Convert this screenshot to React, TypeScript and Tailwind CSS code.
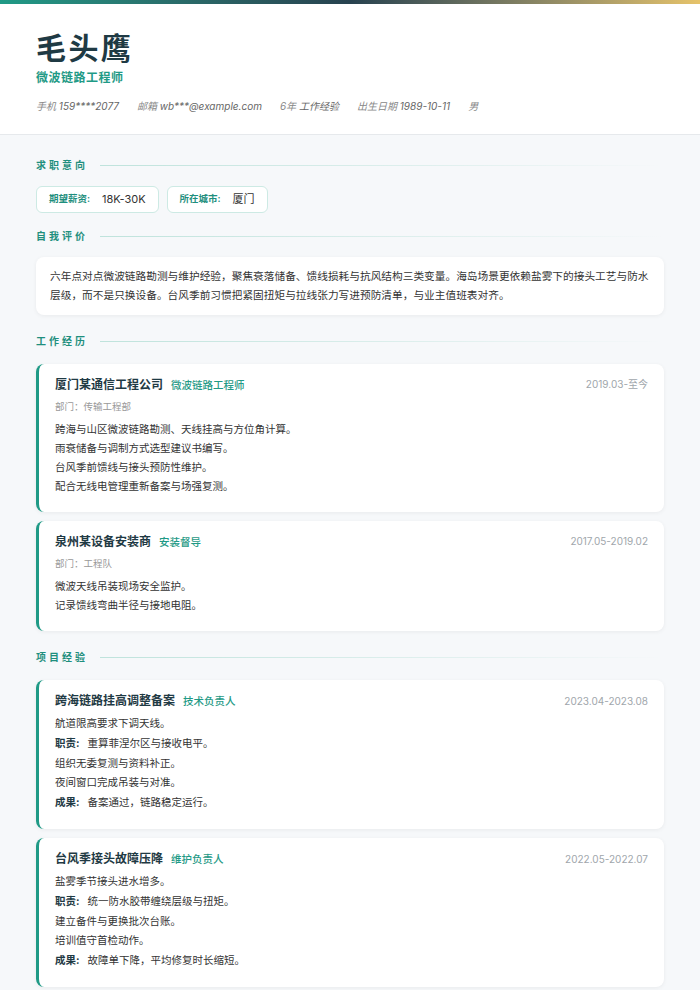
const FONT = { fontFamily: '"Inter", "Noto Sans CJK SC", sans-serif' };

function SectionTitle({ title }: { title: string }) {
  return (
    <div className="flex items-center gap-3">
      <span className="text-[10px] font-semibold tracking-[0.3em] text-[#1f8f7e]">{title}</span>
      <div className="h-px flex-1 bg-gradient-to-r from-[#bfe3dc] to-transparent" />
    </div>
  );
}

function Card({
  title,
  role,
  date,
  children,
}: {
  title: string;
  role: string;
  date: string;
  children: React.ReactNode;
}) {
  return (
    <div className="rounded-lg border-l-[3px] border-[#1f9a86] bg-white px-[16px] pb-[16px] pt-[12px] shadow-[0_1px_4px_rgba(0,0,0,0.06)]">
      <div className="flex items-center justify-between">
        <div className="flex items-baseline gap-2">
          <span className="text-[12px] font-bold text-[#1f3a44]">{title}</span>
          <span className="text-[10.5px] font-medium text-[#1f9a86]">{role}</span>
        </div>
        <span className="text-[10px] text-[#a0a6ab]">{date}</span>
      </div>
      {children}
    </div>
  );
}

function Line({ children }: { children: React.ReactNode }) {
  return <p className="text-[10.5px] leading-[19px] text-[#333]">{children}</p>;
}

function Label({ label, text }: { label: string; text: string }) {
  return (
    <p className="my-[1px] text-[10.5px] leading-[19px] text-[#333]">
      <span className="mr-2 font-bold text-[#1f3a44]">{label}</span>
      {text}
    </p>
  );
}

export default function App() {
  return (
    <div style={FONT} className="min-h-[990px] bg-[#f6f8fa]">
      <div className="h-1 bg-gradient-to-r from-[#1f9a86] via-[#27424f] to-[#e6c36a]" />
      <div className="border-b border-[#e6e9ec] bg-white px-[36px] pb-[20px] pt-[26px]">
        <h1 className="text-[30px] font-bold leading-[36px] tracking-[0.08em] text-[#1f3a44]">毛头鹰</h1>
        <p className="mt-[3px] text-[12px] font-semibold tracking-[0.04em] text-[#1f9a86]">微波链路工程师</p>
        <div className="mt-[12px] flex gap-[18px] text-[10px] italic text-[#888]">
          <span>手机 <span className="text-[#666]">159****2077</span></span>
          <span>邮箱 <span className="text-[#666]">wb***@example.com</span></span>
          <span>6年 <span className="text-[#666]">工作经验</span></span>
          <span>出生日期 <span className="text-[#666]">1989-10-11</span></span>
          <span>男</span>
        </div>
      </div>

      <div className="flex flex-col px-[36px] pt-[23px]">
        <SectionTitle title="求职意向" />
        <div className="mt-[13px] flex gap-[8px]">
          <div className="flex items-center gap-3 rounded-md border border-[#cdeae4] bg-white px-[12px] py-[4px] text-[11px]">
            <span className="text-[9.5px] font-semibold text-[#1f8f7e]">期望薪资:</span>
            <span className="text-[#333]">18K-30K</span>
          </div>
          <div className="flex items-center gap-3 rounded-md border border-[#cdeae4] bg-white px-[12px] py-[4px] text-[11px]">
            <span className="text-[9.5px] font-semibold text-[#1f8f7e]">所在城市:</span>
            <span className="text-[#333]">厦门</span>
          </div>
        </div>

        <div className="mt-[16px]">
          <SectionTitle title="自我评价" />
        </div>
        <div className="mt-[13px] rounded-lg bg-white px-[14px] py-[10px] shadow-[0_1px_4px_rgba(0,0,0,0.06)]">
          <p className="text-[10.7px] leading-[19px] text-[#333]">
            六年点对点微波链路勘测与维护经验，聚焦衰落储备、馈线损耗与抗风结构三类变量。海岛场景更依赖盐雾下的接头工艺与防水层级，而不是只换设备。台风季前习惯把紧固扭矩与拉线张力写进预防清单，与业主值班表对齐。
          </p>
        </div>

        <div className="mt-[19px]">
          <SectionTitle title="工作经历" />
        </div>
        <div className="mt-[15px] flex flex-col gap-[9px]">
          <Card title="厦门某通信工程公司" role="微波链路工程师" date="2019.03-至今">
            <p className="mb-[6px] mt-[6px] text-[9.5px] text-[#999]">部门：传输工程部</p>
            <Line>跨海与山区微波链路勘测、天线挂高与方位角计算。</Line>
            <Line>雨衰储备与调制方式选型建议书编写。</Line>
            <Line>台风季前馈线与接头预防性维护。</Line>
            <Line>配合无线电管理重新备案与场强复测。</Line>
          </Card>
          <Card title="泉州某设备安装商" role="安装督导" date="2017.05-2019.02">
            <p className="mb-[6px] mt-[6px] text-[9.5px] text-[#999]">部门：工程队</p>
            <Line>微波天线吊装现场安全监护。</Line>
            <Line>记录馈线弯曲半径与接地电阻。</Line>
          </Card>
        </div>

        <div className="mt-[19px]">
          <SectionTitle title="项目经验" />
        </div>
        <div className="mt-[15px] flex flex-col gap-[9px]">
          <Card title="跨海链路挂高调整备案" role="技术负责人" date="2023.04-2023.08">
            <div className="mt-[4px]">
              <Line>航道限高要求下调天线。</Line>
              <Label label="职责:" text="重算菲涅尔区与接收电平。" />
              <Line>组织无委复测与资料补正。</Line>
              <Line>夜间窗口完成吊装与对准。</Line>
              <Label label="成果:" text="备案通过，链路稳定运行。" />
            </div>
          </Card>
          <Card title="台风季接头故障压降" role="维护负责人" date="2022.05-2022.07">
            <div className="mt-[4px]">
              <Line>盐雾季节接头进水增多。</Line>
              <Label label="职责:" text="统一防水胶带缠绕层级与扭矩。" />
              <Line>建立备件与更换批次台账。</Line>
              <Line>培训值守首检动作。</Line>
              <Label label="成果:" text="故障单下降，平均修复时长缩短。" />
            </div>
          </Card>
        </div>
      </div>
    </div>
  );
}
